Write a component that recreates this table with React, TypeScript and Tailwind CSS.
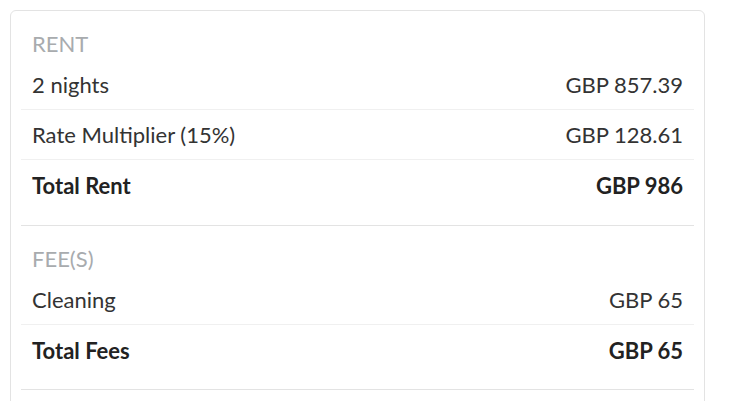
type Line = { label: string; amount: string; total?: boolean };

const sections: { title: string; lines: Line[] }[] = [
  {
    title: "RENT",
    lines: [
      { label: "2 nights", amount: "GBP 857.39" },
      { label: "Rate Multiplier (15%)", amount: "GBP 128.61" },
      { label: "Total Rent", amount: "GBP 986", total: true },
    ],
  },
  {
    title: "FEE(S)",
    lines: [
      { label: "Cleaning", amount: "GBP 65" },
      { label: "Total Fees", amount: "GBP 65", total: true },
    ],
  },
];

export default function App() {
  return (
    <div
      className="h-[401px] overflow-hidden bg-white p-[10px] pr-[30px] text-[22px] text-[#333]"
      style={{ fontFamily: "Lato, 'Noto Sans', sans-serif" }}
    >
      <div className="rounded-md border border-[#e3e3e3] px-[10px] pb-[40px]">
        {sections.map((s, si) => (
          <section
            key={s.title}
            className={`border-b border-[#e3e3e3] pt-[18px] ${si === 0 ? "pb-[15px]" : "pb-[14px]"}`}
          >
            <div className="flex h-[31px] items-center px-[11px] pb-[2px] text-[#a8abae]">{s.title}</div>
            {s.lines.map((l, i) => (
              <div
                key={l.label}
                className={`flex h-[50px] items-center justify-between px-[11px] ${
                  i < s.lines.length - 1 ? "border-b border-[#f0f0f0]" : ""
                } ${l.total ? "font-bold text-[#222]" : ""}`}
              >
                <span>{l.label}</span>
                <span>{l.amount}</span>
              </div>
            ))}
          </section>
        ))}
      </div>
    </div>
  );
}
